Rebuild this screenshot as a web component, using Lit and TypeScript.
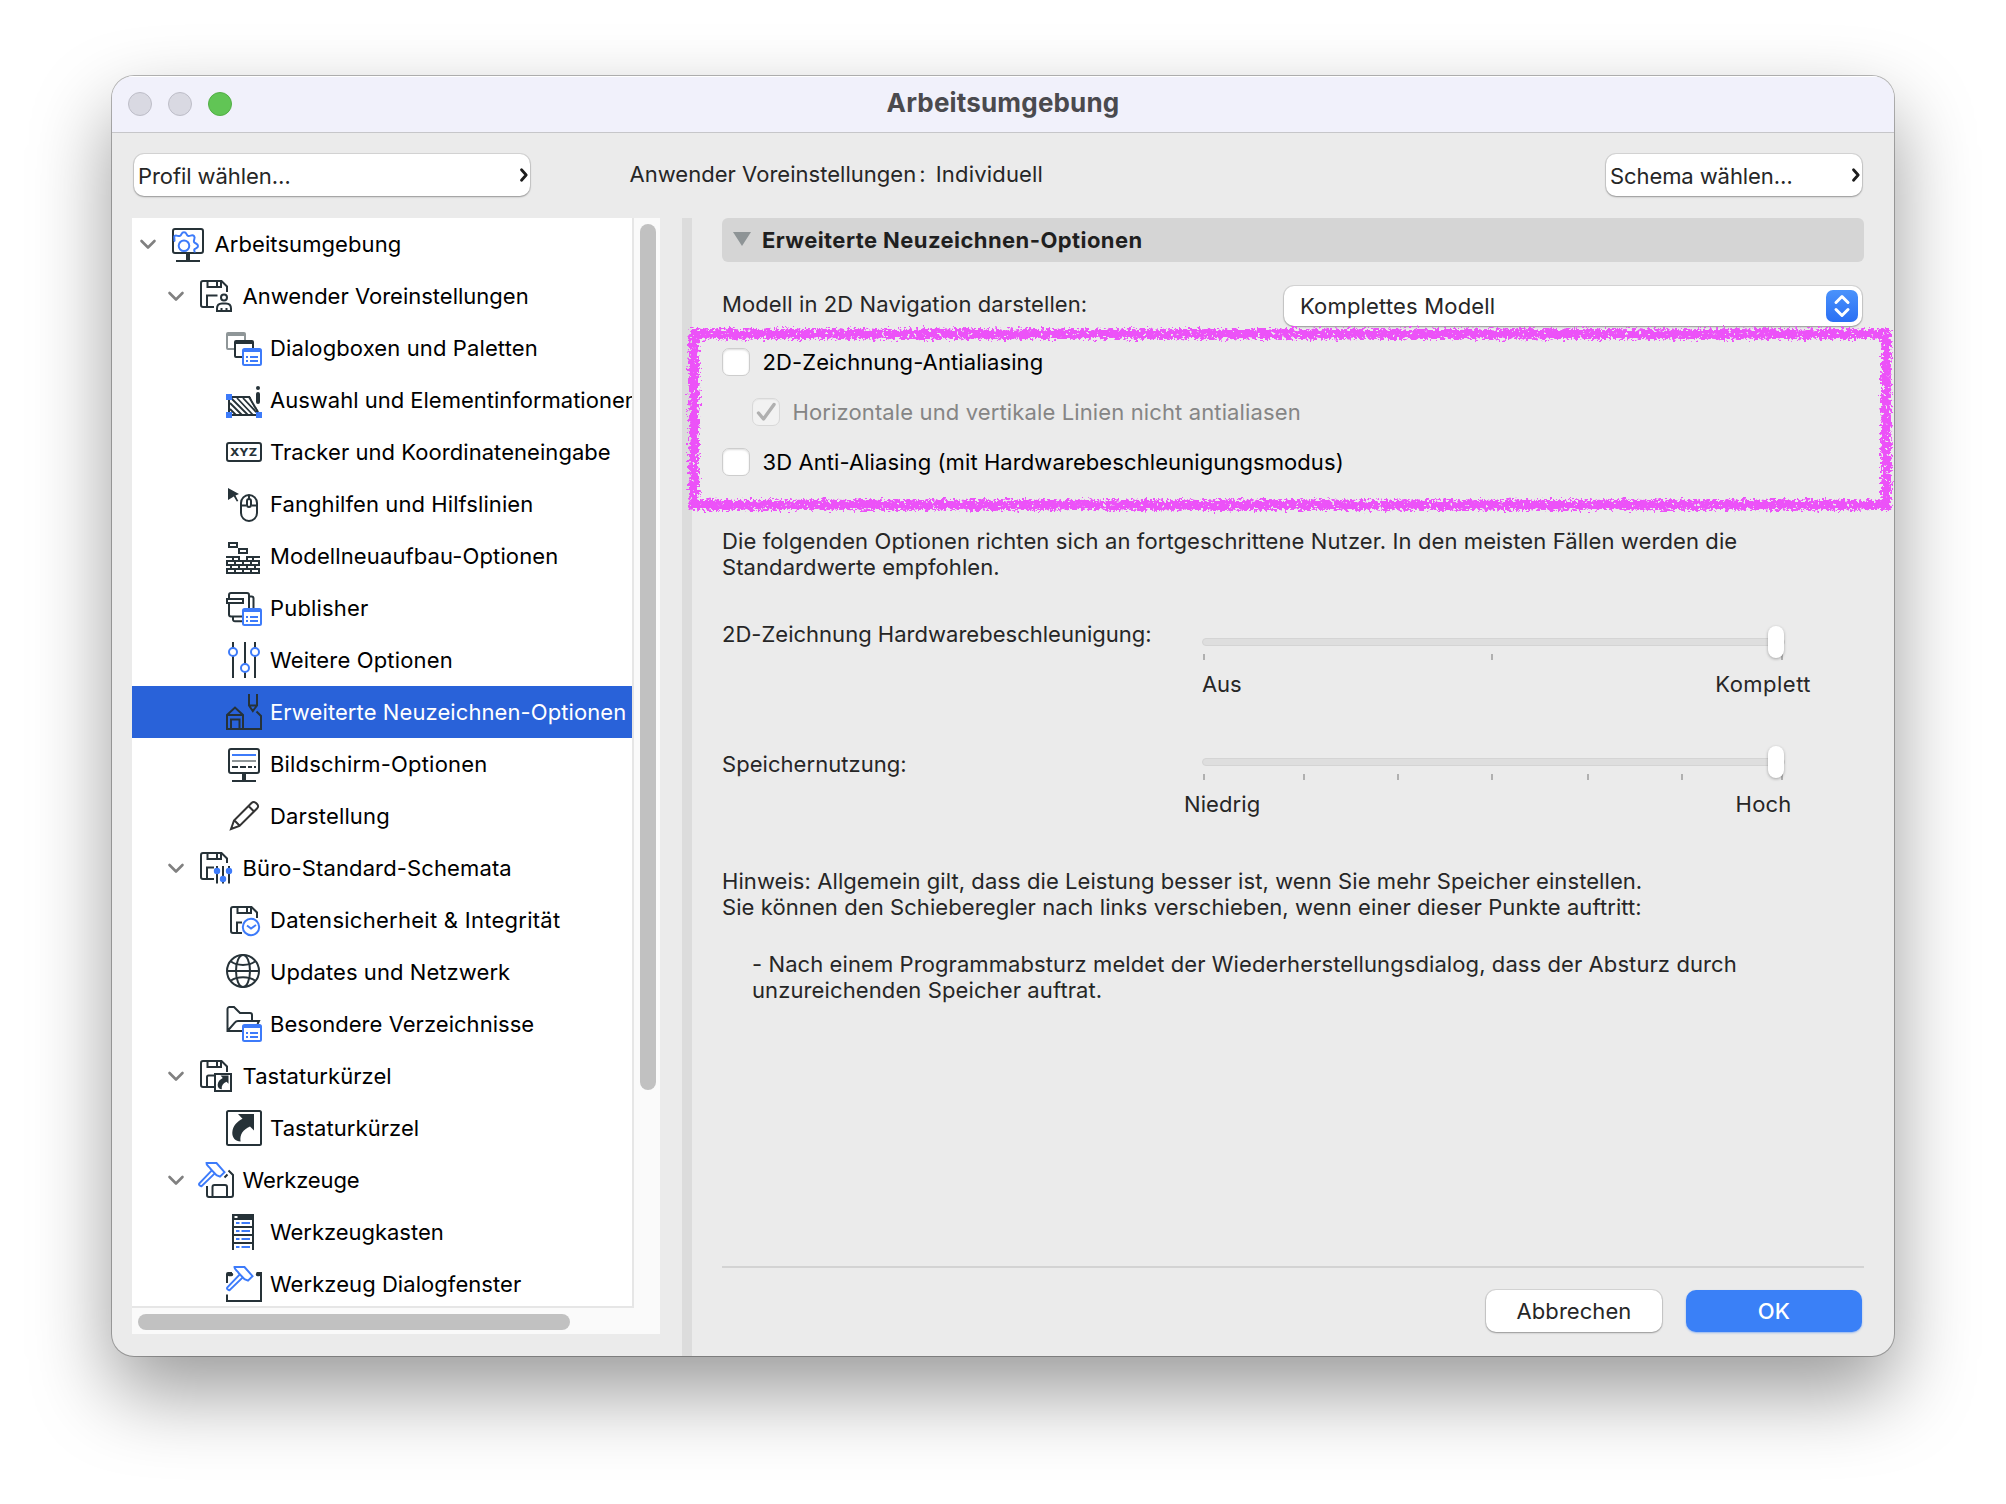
import { LitElement, html, svg, css } from "lit";
import { customElement, property } from "lit/decorators.js";

const INK = "#263238";
const BLUE = "#3d7bfa";

/* Small list window used as an overlay badge on several icons. */
const listBadge = svg`
  <rect x="17" y="19" width="18" height="16" rx="1.5" fill="#fff" stroke="${BLUE}" stroke-width="2"/>
  <path d="M17 20.5H35" stroke="${BLUE}" stroke-width="3"/>
  <path d="M20 27h2M20 31h2M24 27h8M24 31h8" stroke="${BLUE}" stroke-width="2"/>`;

const hammer = svg`
  <path d="M8.5 1H18.5L26.5 10.2 22 14.6 18.5 13.2 12.8 7.2C11.5 4.5 8 3.5 8.5 1Z" stroke="${BLUE}"/>
  <path d="M13.6 8.6 1.4 21.4c-1 1.2.8 3.2 2.4 2.6L16.8 11.4" stroke="${BLUE}"/>`;

const shortcutArrow = svg`<path d="M12 4H28V20.5L24 16.5C17 19.5 13.5 24.5 14.6 31.5 9.500 31.500 6 27.500 6.300 22.500 6.700 15.500 11.500 11.500 16.500 8.800Z" fill="${INK}" stroke="none"/>`;

const icons: Record<string, unknown> = {
  gear: svg`
    <rect x="3" y="3" width="30" height="24" rx="2"/>
    <path d="M18 28v7" stroke-width="4"/><path d="M6 35H30"/>
    <g stroke="${BLUE}"><circle cx="14" cy="19.700" r="5.300"/>
    <path d="M4 15.500C5.500 14 3.500 11.500 4.500 10C6.500 8.500 8.500 11 10 9.800C12 8.800 11 6.300 14 6.300C17 6.300 16 8.800 18 9.800C20 10.800 22 8 24 10C26 12 23 14 24 16C25 18 28 17.200 28 20C28 22.500 25 22 24.300 23.500C23.800 24.800 25 25 24.500 26.500"/></g>`,
  user: svg`
    <path d="M16 29H5a2 2 0 0 1-2-2V5a2 2 0 0 1 2-2H23.500L29 8.500V14M9.500 3v6H23V3M19 3v6M9 29V17.500H19.500"/>
    <circle cx="26" cy="19.500" r="3"/>
    <path d="M19 33V30.500c0-3 2-5 5-5h4c3 0 5 2 5 5V33ZM23.500 33v-3M28.500 33v-3"/>`,
  dialogs: svg`
    <path d="M8 19H2a1 1 0 0 1-1-1V4a1 1 0 0 1 1-1H18a1 1 0 0 1 1 1V10" stroke="#8f9698"/>
    <path d="M1 4.500H19" stroke="#8f9698" stroke-width="3"/>
    <path d="M16 27H10a1 1 0 0 1-1-1V12a1 1 0 0 1 1-1H26a1 1 0 0 1 1 1V18"/>
    <path d="M9 12.500H27" stroke-width="3"/>${listBadge}`,
  hatch: svg`
    <path d="M3 15V33H33L24 15M6 15H24"/>
    <path d="M4 27l6 6M4 21l12 12M5 16l17 17M11 16l16 17M17 16l14 15" stroke-width="1.800"/>
    <path d="M0 12h6v6H0ZM0 30h6v6H0ZM30 30h6v6H30Z" fill="${BLUE}" stroke="none"/>
    <path d="M24.500 12l6 16" stroke="#fff" stroke-width="2"/>
    <path d="M23 15l9 15"/>
    <circle cx="32" cy="6" r="2" fill="${INK}" stroke="none"/>
    <path d="M32 12V20" stroke-width="4" stroke-linecap="round"/>`,
  xyz: svg`
    <rect x="1" y="9" width="34" height="18" rx="2"/>
    <text x="4" y="22" font-family="Inter, sans-serif" font-weight="800" font-size="11" textLength="27" lengthAdjust="spacingAndGlyphs" fill="${INK}" stroke="none">XYZ</text>`,
  mouse: svg`
    <path d="M2 2 13 8 9.500 9.500 12.300 15 10.800 15.500 7.800 10.500 2 14Z" fill="${INK}" stroke="none"/>
    <rect x="15" y="9" width="16" height="26" rx="8"/>
    <path d="M15 19.500H20M26 19.500H31M23 9v4"/>
    <rect x="21" y="13" width="4" height="8" rx="2"/>`,
  bricks: svg`
    <path d="M3 5h8v4H3ZM13 11h8v4h-8ZM0 19H14M20 19H34M0 23H34M0 27H34M0 31H34M0 35H34"/>
    <path d="M7 19v4M13 19v4M21 19v4M27 19v4M1 23v4M9 23v4M17 23v4M25 23v4M33 23v4M5 27v4M13 27v4M21 27v4M29 27v4M1 31v4M9 31v4M17 31v4M25 31v4M33 31v4"/>`,
  publisher: svg`
    <path d="M3 8V5a2 2 0 0 1 2-2H21a2 2 0 0 1 2 2V18M3 14V24.500a2 2 0 0 0 2 2H16M23 6.500h2.500a2 2 0 0 1 2 2V18M7 27v2.500a2 2 0 0 0 2 1.800H16"/>
    <rect x="1" y="9" width="16" height="4"/>${listBadge}`,
  sliders: svg`
    <path d="M7 0V36M19 0V36M29 0V36"/>
    <g stroke="${BLUE}" fill="#fff"><circle cx="7" cy="10" r="4"/><circle cx="29" cy="10" r="4"/><circle cx="19" cy="26" r="4"/></g>`,
  redraw: svg`
    <path d="M1 35V21L9 13.500 17 21V35ZM2 21H16M5 35V25.500h8.500V35M17 35H35V22L30.500 17.500M23 0V11.500L26.800 17 31 11.500V0M23 11.500h8"/>`,
  screen: svg`
    <rect x="3" y="3" width="30" height="24" rx="2"/>
    <path d="M18 28v7" stroke-width="4"/><path d="M6 35H30"/>
    <path d="M6 9H30" stroke="${BLUE}"/><path d="M6 15H30" stroke="#8f9698"/><path d="M6 21H12M14 21H20M22 21h4M28 21h2"/>`,
  pencil: svg`
    <path d="M5 31 8 22.500 25.500 5c1.500-1.500 3-1.500 4.500 0l1 1c1.500 1.500 1.500 3 0 4.500L13.500 28ZM8.500 22.500l5 5M22.500 8l5.500 5.500" stroke="#333"/>`,
  schemes: svg`
    <path d="M16 29H5a2 2 0 0 1-2-2V5a2 2 0 0 1 2-2H23.500L29 8.500V13M9.500 3v6H23V3M19 3v6M9 29V17.500H16"/>
    <path d="M19 16V33.500M25 16V33.500M31 16V33.500"/>
    <g fill="${BLUE}" stroke="none"><circle cx="19" cy="21" r="3.200"/><circle cx="31" cy="21" r="3.200"/><circle cx="25" cy="29" r="3.200"/></g>`,
  safety: svg`
    <path d="M16 31H7a2 2 0 0 1-2-2V7a2 2 0 0 1 2-2H25.500L31 10.500V16M11.500 5v6H25V5M21 5v6M11 31V20.500H16"/>
    <circle cx="25" cy="25" r="8.200" stroke="${BLUE}"/><path d="M21 23.500l4 3 5-3.500" stroke="${BLUE}"/>`,
  globe: svg`
    <circle cx="17" cy="17" r="16"/><ellipse cx="17" cy="17" rx="7" ry="16"/>
    <path d="M1 17H33M5 7.500C11 12 23 12 29 7.500M5 26.500C11 22 23 22 29 26.500"/>`,
  folder: svg`
    <path d="M16 25H1.500V3a2 2 0 0 1 2-2H8L14 7H24a2 2 0 0 1 2 2v6M1.500 25 9 16.500q1-1.500 3-1.500H33L31.500 18"/>${listBadge}`,
  shortcutDisk: svg`
    <path d="M17 29H5a2 2 0 0 1-2-2V5a2 2 0 0 1 2-2H23.500L29 8.500V14M9.500 3v6H23V3M19 3v6M9 29V19q0-1.500 1.500-1.500H17"/>
    <rect x="17" y="16" width="16" height="17" fill="#fff"/>
    <g transform="translate(16.500 15.500) scale(.5)">${shortcutArrow}</g>`,
  shortcut: svg`<rect x="1" y="1" width="34" height="34" rx="1.500"/>${shortcutArrow}`,
  tools: svg`
    ${hammer}
    <path d="M9 24V33a2 2 0 0 0 2 2H33a2 2 0 0 0 2-2V13L30.500 8.500M14.500 35V25a2 2 0 0 1 2-2H27a2 2 0 0 1 2 2V35M26.500 15.500l3-3"/>`,
  toolbox: svg`
    <path d="M7 36V1H27V36M7 13H27M7 21H27M7 29H27"/>
    <path d="M6 1.500a1.500 1.500 0 0 1 1.500-1.500h19a1.500 1.500 0 0 1 1.500 1.500V6H6Z" fill="${INK}" stroke="none"/>
    <path d="M8.500 3h3" stroke="#fff"/>
    <path d="M10 9h3.500M15.500 9H24M10 17h3.500M15.500 17H24M10 25h3.500M15.500 25H24M10 33h3.500M15.500 33H24" stroke="${BLUE}"/>`,
  toolDialog: svg`
    <path d="M1 17V8q0-1 1-1H6M1 28.500V35H35V7H30.500"/>
    <path d="M3 8.500H5.500M31.500 8.500H33" stroke-width="3.500" stroke-linecap="round"/>${hammer}`,
};

interface TreeItem {
  label: string;
  icon: string;
  level: 1 | 2 | 3;
  width: number;
  selected?: boolean;
}

const TREE: TreeItem[] = [
  { label: "Arbeitsumgebung", icon: "gear", level: 1, width: 185 },
  { label: "Anwender Voreinstellungen", icon: "user", level: 2, width: 284.5 },
  { label: "Dialogboxen und Paletten", icon: "dialogs", level: 3, width: 266 },
  { label: "Auswahl und Elementinformationen", icon: "hatch", level: 3, width: 366 },
  { label: "Tracker und Koordinateneingabe", icon: "xyz", level: 3, width: 339 },
  { label: "Fanghilfen und Hilfslinien", icon: "mouse", level: 3, width: 261.5 },
  { label: "Modellneuaufbau-Optionen", icon: "bricks", level: 3, width: 286.5 },
  { label: "Publisher", icon: "publisher", level: 3, width: 96.5 },
  { label: "Weitere Optionen", icon: "sliders", level: 3, width: 181 },
  { label: "Erweiterte Neuzeichnen-Optionen", icon: "redraw", level: 3, width: 354.5, selected: true },
  { label: "Bildschirm-Optionen", icon: "screen", level: 3, width: 215.5 },
  { label: "Darstellung", icon: "pencil", level: 3, width: 118 },
  { label: "Büro-Standard-Schemata", icon: "schemes", level: 2, width: 267.5 },
  { label: "Datensicherheit & Integrität", icon: "safety", level: 3, width: 288.5 },
  { label: "Updates und Netzwerk", icon: "globe", level: 3, width: 238.5 },
  { label: "Besondere Verzeichnisse", icon: "folder", level: 3, width: 262.5 },
  { label: "Tastaturkürzel", icon: "shortcutDisk", level: 2, width: 147.5 },
  { label: "Tastaturkürzel", icon: "shortcut", level: 3, width: 147.5 },
  { label: "Werkzeuge", icon: "tools", level: 2, width: 115.5 },
  { label: "Werkzeugkasten", icon: "toolbox", level: 3, width: 172 },
  { label: "Werkzeug Dialogfenster", icon: "toolDialog", level: 3, width: 249.5 },
];

/** One line of text whose tracking is adjusted so that it spans `width` pixels. */
@customElement("fit-text")
export class FitText extends LitElement {
  @property({ type: Number }) width = 0;
  @property() text = "";

  static styles = css`
    :host { display: block; white-space: pre; }
    .run { display: inline-block; }
  `;

  updated() {
    const run = this.renderRoot.querySelector<HTMLElement>(".run");
    if (!run || !this.width) return;
    run.style.letterSpacing = "0px";
    const gap = this.width + 1.7 - run.getBoundingClientRect().width;
    run.style.letterSpacing = `${gap / Math.max(1, this.text.length - 1)}px`;
  }

  render() {
    return html`<span class="run">${this.text}</span>`;
  }
}

@customElement("tree-row")
export class TreeRow extends LitElement {
  @property({ attribute: false }) item!: TreeItem;

  static styles = css`
    :host { display: block; }
    .row { display: flex; align-items: center; height: 52px; }
    .selected { background: #2962d9; color: #fff; }
    .l1 { padding-left: 7px; }
    .l2 { padding-left: 35px; }
    .l3 { padding-left: 94px; }
    .chevron { width: 18px; height: 12px; margin-right: 13px; flex: none; }
    .icon { width: 36px; height: 36px; flex: none; }
    .label { margin-left: 8px; }
    .l2 .label, .l1 .label { margin-left: 8.500px; }
  `;

  render() {
    const { label, icon, level, width, selected } = this.item;
    return html`<div class="row l${level} ${selected ? "selected" : ""}">
      ${level < 3
        ? html`<svg class="chevron" viewBox="0 0 18 12"><path d="M2.500 3 9 9.500 15.500 3" fill="none" stroke="#808080" stroke-width="2.600" stroke-linecap="round" stroke-linejoin="round"/></svg>`
        : ""}
      <svg class="icon" viewBox="0 0 36 36" fill="none" stroke=${INK} stroke-width="2">${icons[icon]}</svg>
      <fit-text class="label" .text=${label} .width=${width}></fit-text>
    </div>`;
  }
}

@customElement("tick-slider")
export class TickSlider extends LitElement {
  @property({ attribute: false }) ticks: number[] = [];

  static styles = css`
    :host { display: block; width: 584px; height: 36px; }
    svg { display: block; overflow: visible; }
    .knob { filter: drop-shadow(0 1px 1.500px rgba(0, 0, 0, 0.3)); }
  `;

  render() {
    return html`<svg width="584" height="36" viewBox="0 0 584 36">
      <rect x="0.500" y="12.500" width="582" height="7" rx="3.500" fill="#dedede" stroke="#d4d4d4"/>
      ${this.ticks.map((x) => svg`<rect x=${x} y="28" width="2" height="6" fill="#b0b0b0"/>`)}
      <rect class="knob" x="566" y="0" width="16" height="32" rx="8" fill="#fff"/>
    </svg>`;
  }
}

@customElement("app-root")
export class AppRoot extends LitElement {
  static styles = css`
    :host {
      display: block;
      box-sizing: border-box;
      height: 1504px;
      padding: 76px 112px;
      background: #fff;
      font: 22px/26px Inter, "Liberation Sans", sans-serif;
      color: #262626;
      overflow: hidden;
    }
    .window {
      position: relative;
      display: flex;
      flex-direction: column;
      height: 1280px;
      border-radius: 22px;
      background: #ebebeb;
      box-shadow: 0 0 0 1px rgba(0, 0, 0, 0.27), 0 36px 80px rgba(0, 0, 0, 0.4);
      overflow: hidden;
    }
    .titlebar {
      display: grid;
      grid-template-columns: 1fr auto 1fr;
      align-items: center;
      height: 56px;
      background: #f1f1fb;
      border-bottom: 1px solid #c6c6c9;
      flex: none;
      box-shadow: inset 0 1px 0 #fff;
    }
    .lights { display: flex; gap: 16px; padding-left: 16px; }
    .light { width: 24px; height: 24px; box-sizing: border-box; border-radius: 50%; background: #d9d9e2; border: 1px solid #bdbdc7; }
    .zoom { background: #61c555; border-color: #52ae45; }
    .title { font-size: 26px; font-weight: 700; line-height: 30px; color: #4a4a4e; padding-bottom: 2px; }
    .toolbar { display: flex; height: 85px; flex: none; padding: 21px 32px 0 22px; box-sizing: border-box; }
    .button {
      display: flex; align-items: center; box-sizing: border-box; height: 42px; border-radius: 10px; background: #fff;
      box-shadow: 0 0 0 1px rgba(0, 0, 0, 0.09), 0 1px 2px rgba(0, 0, 0, 0.3);
    }
    .menu { justify-content: space-between; padding: 0 1px 0 4px; }
    .menu .t { padding-top: 2px; }
    .profile { width: 396px; }
    .schema { width: 256px; margin-left: auto; }
    .crumb { margin: 7px 0 0 99.500px; display: flex; }
    .crumb .sep { margin-left: 3px; width: 16.500px; }
    .main { display: flex; flex: 1; min-height: 0; }
    .sidebar {
      display: grid; grid-template: 1090px 26px / 502px 26px; box-sizing: border-box;
      width: 528px; height: 1116px; margin-left: 20px; background: #fafafa; flex: none;
    }
    .tree { overflow: hidden; background: #fff; border-right: 2px solid #e6e6e6; border-bottom: 2px solid #e6e6e6; color: #000; height: 1088px; }
    .vbar { padding: 6px 0 0 6px; }
    .vthumb { width: 16px; height: 866px; border-radius: 8px; background: #c1c1c1; }
    .hbar { padding: 6px 0 0 6px; }
    .hthumb { width: 432px; height: 16px; border-radius: 8px; background: #c1c1c1; }
    .divider { width: 10px; margin-left: 22px; background: #dcdcdc; flex: none; }
    .panel { display: flex; flex-direction: column; width: 1142px; margin-left: 30px; }
    .section { display: flex; align-items: center; height: 44px; padding-left: 11px; box-sizing: border-box; border-radius: 6px; background: #d5d5d5; font-weight: 700; color: #1f1f1f; }
    .section .t { margin-left: 11px; }
    .section svg { margin-bottom: 3px; }
    .field { display: flex; justify-content: space-between; margin-top: 24px; height: 40px; padding-right: 2px; }
    .field .label { padding-top: 5px; }
    .select { width: 578px; height: 40px; justify-content: space-between; padding: 0 4px 0 16px; }
    .chip { width: 32px; height: 32px; border-radius: 7px; background: linear-gradient(#4a92fb, #2a6ff4); }
    .checks { display: flex; flex-direction: column; gap: 22px; margin-top: 22px; color: #000; }
    .check { display: flex; align-items: center; height: 28px; gap: 12.500px; }
    .box { width: 28px; height: 28px; box-sizing: border-box; border-radius: 7px; background: #fff; border: 1px solid #cdcdcd; box-shadow: inset 0 1px 2px rgba(0, 0, 0, 0.14); }
    .off { padding-left: 30px; color: #858585; }
    .off .box { background: #f2f2f2; border-color: #d8d8d8; box-shadow: inset 0 1px 1px rgba(0, 0, 0, 0.05); }
    .off svg { display: block; }
    .intro { margin-top: 52px; }
    .slider { display: flex; height: 120px; }
    .first { margin-top: 41px; }
    .slider .label { width: 480px; flex: none; }
    .second .label { padding-top: 10px; }
    .control { display: flex; flex-direction: column; padding-top: 5px; width: 640px; }
    .ends { display: flex; justify-content: space-between; margin-top: 9px; }
    .ends.wide { margin-right: 31px; }
    .ends.low { margin-left: -18px; margin-right: 50.500px; }
    .hints { margin-top: 7px; }
    .bullet { margin: 31px 0 0 30px; }
    .footer { display: flex; justify-content: flex-end; gap: 24px; margin-top: auto; margin-bottom: 24px; padding: 22px 2px 0 0; border-top: 2px solid #d3d3d3; }
    .footer .button { width: 176px; justify-content: center; }
    .primary { background: #3a80f7; color: #fff; font-weight: 500; box-shadow: 0 1px 2px rgba(58, 128, 247, 0.5); }
    .marker { position: absolute; left: 570px; top: 246px; pointer-events: none; }
  `;

  render() {
    const line = (text: string, width: number, cls = "t") =>
      html`<fit-text class=${cls} .text=${text} .width=${width}></fit-text>`;
    const caret = html`<svg width="10" height="18" viewBox="0 0 10 18"><path d="M2.500 3.800 7.200 9 2.500 14.200" fill="none" stroke="#1c1c1c" stroke-width="2.800" stroke-linecap="round" stroke-linejoin="round"/></svg>`;
    return html`
      <div class="window">
        <div class="titlebar">
          <div class="lights"><span class="light"></span><span class="light"></span><span class="light zoom"></span></div>
          ${line("Arbeitsumgebung", 231, "title")}
          <span></span>
        </div>
        <div class="toolbar">
          <div class="button menu profile">${line("Profil wählen…", 151)}${caret}</div>
          <div class="crumb">
            ${line("Anwender Voreinstellungen", 285)}<span class="sep">:</span>${line("Individuell", 105.5)}
          </div>
          <div class="button menu schema">${line("Schema wählen…", 181)}${caret}</div>
        </div>
        <div class="main">
          <div class="sidebar">
            <div class="tree">${TREE.map((item) => html`<tree-row .item=${item}></tree-row>`)}</div>
            <div class="vbar"><div class="vthumb"></div></div>
            <div class="hbar"><div class="hthumb"></div></div>
          </div>
          <div class="divider"></div>
          <div class="panel">
            <div class="section">
              <svg width="18" height="14"><path d="M0 0H18L9 14Z" fill="#8e9496"/></svg>
              ${line("Erweiterte Neuzeichnen-Optionen", 378.5)}
            </div>
            <div class="field">
              ${line("Modell in 2D Navigation darstellen:", 363.5, "label")}
              <div class="button select">
                ${line("Komplettes Modell", 193.5)}
                <div class="chip"><svg width="32" height="32" viewBox="0 0 32 32"><path d="M10 12.500 16 6.500 22 12.500M10 19.500 16 25.500 22 19.500" fill="none" stroke="#fff" stroke-width="3" stroke-linecap="round" stroke-linejoin="round"/></svg></div>
              </div>
            </div>
            <div class="checks">
              <div class="check"><span class="box"></span>${line("2D-Zeichnung-Antialiasing", 279)}</div>
              <div class="check off">
                <span class="box"><svg width="26" height="26" viewBox="0 0 26 26"><path d="M5.500 14 10.500 20 21 5.500" fill="none" stroke="#b0b0b0" stroke-width="3.400" stroke-linecap="round" stroke-linejoin="round"/></svg></span>
                ${line("Horizontale und vertikale Linien nicht antialiasen", 506.5)}
              </div>
              <div class="check"><span class="box"></span>${line("3D Anti-Aliasing (mit Hardwarebeschleunigungsmodus)", 579.5)}</div>
            </div>
            <div class="intro">
              ${line("Die folgenden Optionen richten sich an fortgeschrittene Nutzer. In den meisten Fällen werden die", 1013.5)}
              ${line("Standardwerte empfohlen.", 276)}
            </div>
            <div class="slider first">
              ${line("2D-Zeichnung Hardwarebeschleunigung:", 428, "label")}
              <div class="control">
                <tick-slider .ticks=${[1, 289, 579]}></tick-slider>
                <div class="ends wide">${line("Aus", 38)}${line("Komplett", 93.5)}</div>
              </div>
            </div>
            <div class="slider second">
              ${line("Speichernutzung:", 183, "label")}
              <div class="control">
                <tick-slider .ticks=${[1, 101, 195, 289, 385, 479, 579]}></tick-slider>
                <div class="ends low">${line("Niedrig", 74.5)}${line("Hoch", 54)}</div>
              </div>
            </div>
            <div class="hints">
              ${line("Hinweis: Allgemein gilt, dass die Leistung besser ist, wenn Sie mehr Speicher einstellen.", 918.5)}
              ${line("Sie können den Schieberegler nach links verschieben, wenn einer dieser Punkte auftritt:", 918)}
            </div>
            <div class="bullet">
              ${line("- Nach einem Programmabsturz meldet der Wiederherstellungsdialog, dass der Absturz durch", 983)}
              ${line("unzureichenden Speicher auftrat.", 348.5)}
            </div>
            <div class="footer">
              <div class="button">${line("Abbrechen", 113)}</div>
              <div class="button primary">${line("OK", 30.5)}</div>
            </div>
          </div>
        </div>
        <svg class="marker" width="1216" height="196" viewBox="0 0 1216 196">
          <defs>
            <filter id="rough" x="0" y="0" width="1216" height="196" filterUnits="userSpaceOnUse" color-interpolation-filters="sRGB">
              <feTurbulence type="fractalNoise" baseFrequency=".32" numOctaves="2" seed="4" result="n"/>
              <feDisplacementMap in="SourceGraphic" in2="n" scale="8" xChannelSelector="R" yChannelSelector="G" result="d"/>
              <feColorMatrix in="n" type="matrix" values="0 0 0 0 0  0 0 0 0 0  0 0 0 0 0  0 0 14 0 -6.300" result="m"/>
              <feComposite in="d" in2="m" operator="in"/>
            </filter>
            <filter id="core" x="0" y="0" width="1216" height="196" filterUnits="userSpaceOnUse" color-interpolation-filters="sRGB">
              <feTurbulence type="fractalNoise" baseFrequency=".28" numOctaves="2" seed="9" result="n"/>
              <feDisplacementMap in="SourceGraphic" in2="n" scale="7" xChannelSelector="R" yChannelSelector="G" result="d"/>
              <feColorMatrix in="n" type="matrix" values="0 0 0 0 0  0 0 0 0 0  0 0 0 0 0  0 0 14 0 -4.200" result="m"/>
              <feComposite in="d" in2="m" operator="in"/>
            </filter>
          </defs>
          <rect x="12" y="12" width="1192" height="171" fill="none" stroke="#ec52f8" stroke-width="12" filter="url(#rough)"/>
          <rect x="12" y="12" width="1192" height="171" fill="none" stroke="#ec52f8" stroke-width="8" filter="url(#core)"/>
        </svg>
      </div>`;
  }
}
